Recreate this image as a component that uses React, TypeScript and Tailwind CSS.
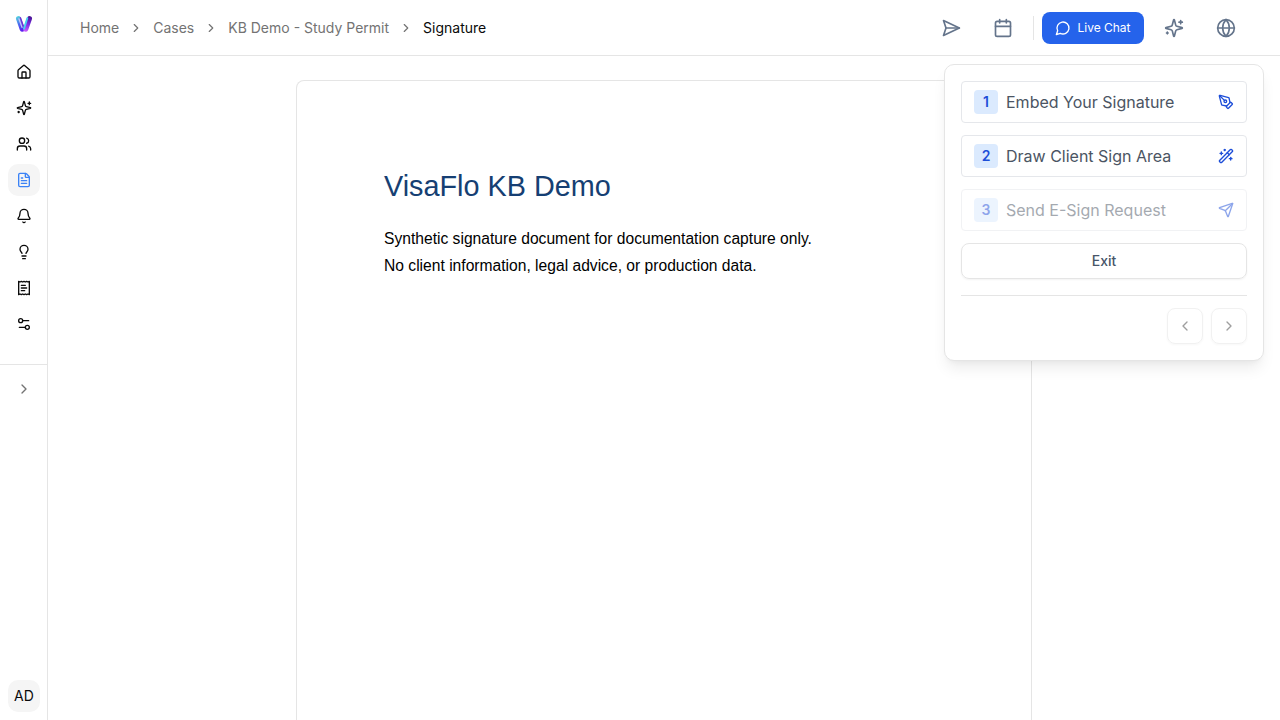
import React from "react";
import { House, Users, FileText, Bell, Lightbulb, Settings2, ChevronRight, ChevronLeft, Calendar, Globe, PenTool, WandSparkles, Send } from "lucide-react";

function Icon({ size, children }: { size: number; children: React.ReactNode }) {
  return (
    <svg width={size} height={size} viewBox="0 0 24 24" fill="none" stroke="currentColor" strokeWidth="2" strokeLinecap="round" strokeLinejoin="round">
      {children}
    </svg>
  );
}

function Sparkle({ size }: { size: number }) {
  return (
    <Icon size={size}>
      <path d="M9.937 15.5A2 2 0 0 0 8.5 14.063l-6.135-1.582a.5.5 0 0 1 0-.962L8.5 9.936A2 2 0 0 0 9.937 8.5l1.582-6.135a.5.5 0 0 1 .963 0L14.063 8.5A2 2 0 0 0 15.5 9.937l6.135 1.581a.5.5 0 0 1 0 .964L15.5 14.063a2 2 0 0 0-1.437 1.437l-1.582 6.135a.5.5 0 0 1-.963 0z" />
      <path d="M20 3v4M22 5h-4M4 17v2M5 18H3" />
    </Icon>
  );
}

function ReceiptIcon() {
  return (
    <Icon size={16}>
      <path d="M4 2v20l2-1 2 1 2-1 2 1 2-1 2 1 2-1 2 1V2l-2 1-2-1-2 1-2-1-2 1-2-1-2 1Z" />
      <path d="M14 8H8M16 12H8M13 16H8" />
    </Icon>
  );
}

function Logo() {
  return (
    <svg width="18" height="18" viewBox="0 0 18 18" fill="none" strokeLinecap="round">
      <defs>
        <linearGradient id="leftArm" gradientUnits="userSpaceOnUse" x1="2" y1="2" x2="7" y2="16">
          <stop offset="0" stopColor="#55cfe0" />
          <stop offset="0.5" stopColor="#4a6cf0" />
          <stop offset="1" stopColor="#5a1cf0" />
        </linearGradient>
        <linearGradient id="rightArm" gradientUnits="userSpaceOnUse" x1="15" y1="2" x2="10" y2="16">
          <stop offset="0" stopColor="#4b1496" />
          <stop offset="0.5" stopColor="#7a2ee6" />
          <stop offset="1" stopColor="#c85cfa" />
        </linearGradient>
      </defs>
      <path d="M3.5 3.6 7.2 14.2" stroke="url(#leftArm)" strokeWidth="5" />
      <path d="M14.5 3.6 10.8 14.2" stroke="url(#rightArm)" strokeWidth="5" />
      <path d="M5.4 2.8 9 13" stroke="#7430d2" strokeWidth="1.4" />
      <path d="M3.9 3.8 7 12.4" stroke="#c9c4f8" strokeWidth="1.3" />
      <path d="M12.3 3.2 9 13.6" stroke="#49d3ee" strokeWidth="1.9" />
    </svg>
  );
}

const nav = [
  <House size={16} />,
  <Sparkle size={16} />,
  <Users size={16} />,
  <FileText size={16} />,
  <Bell size={16} />,
  <Lightbulb size={16} />,
  <ReceiptIcon />,
  <Settings2 size={16} />,
];

const steps = [
  { label: "Embed Your Signature", icon: <PenTool size={16} />, disabled: false },
  { label: "Draw Client Sign Area", icon: <WandSparkles size={16} />, disabled: false },
  { label: "Send E-Sign Request", icon: <Send size={16} />, disabled: true },
];

const crumbs = ["Home", "Cases", "KB Demo - Study Permit"];

export default function App() {
  return (
    <div className="relative flex h-[720px] w-full overflow-hidden bg-white font-['Inter',sans-serif] text-neutral-950 antialiased">
      <aside className="flex w-12 shrink-0 flex-col border-r border-neutral-200">
        <div className="flex h-12 items-center justify-center"><Logo /></div>
        <nav className="flex flex-col gap-1 px-2 pt-2">
          {nav.map((icon, i) => (
            <div key={i} className={i === 3 ? "flex h-8 w-8 items-center justify-center rounded-[10px] bg-neutral-100 text-[#3b82f6]" : "flex h-8 w-8 items-center justify-center"}>{icon}</div>
          ))}
        </nav>
        <div className="mt-6 flex h-12 items-center justify-center border-t border-neutral-200 text-neutral-500"><ChevronRight size={16} /></div>
        <div className="mx-2 mt-auto mb-2 flex h-8 w-8 items-center justify-center rounded-[10px] bg-neutral-100 text-sm">AD</div>
      </aside>
      <div className="flex min-w-0 flex-1 flex-col">
        <header className="flex h-14 shrink-0 items-center justify-between border-b border-neutral-200 pr-9 pl-8">
          <div className="flex items-center gap-2.5 text-sm text-neutral-500">
            {crumbs.map((c) => (
              <React.Fragment key={c}>
                <span>{c}</span>
                <ChevronRight size={14} />
              </React.Fragment>
            ))}
            <span className="text-neutral-950">Signature</span>
          </div>
          <div className="flex items-center text-[#64748b]">
            <div className="flex w-9 justify-center">
              <Icon size={20}><path d="m3 3 3 9-3 9 19-9Z" /><path d="M6 12h16" /></Icon>
            </div>
            <div className="ml-4 flex w-9 justify-center"><Calendar size={20} /></div>
            <div className="mr-2 ml-3 h-6 w-px bg-neutral-200" />
            <div className="flex h-8 w-[102px] items-center justify-center gap-1.5 rounded-lg bg-[#2563eb] text-xs text-white">
              <Icon size={16}><path d="M7.9 20A9 9 0 1 0 4 16.1L2 22Z" /></Icon>
              Live Chat
            </div>
            <div className="ml-3 flex w-9 justify-center"><Sparkle size={20} /></div>
            <div className="ml-4 flex w-9 justify-center"><Globe size={20} /></div>
          </div>
        </header>
        <main className="flex flex-1 pt-6 pl-[248px]">
          <article className="w-[736px] rounded-t-lg border border-b-0 border-neutral-200 px-[87px] pt-[85px] font-['Liberation_Sans',sans-serif]">
            <h1 className="text-[28.8px] leading-10 text-[#163f73]">VisaFlo KB Demo</h1>
            <p className="mt-[19px] text-[15.63px] leading-[27px] text-black">Synthetic signature document for documentation capture only.<br />No client information, legal advice, or production data.</p>
          </article>
        </main>
      </div>
      <section className="absolute top-16 right-4 flex w-80 flex-col gap-3 rounded-[10px] border border-neutral-200 bg-white p-4 shadow-[0_10px_15px_-3px_rgba(0,0,0,0.08),0_4px_6px_-4px_rgba(0,0,0,0.06)]">
        {steps.map((s, i) => (
          <div key={s.label} className={s.disabled ? "flex h-[42px] items-center rounded border border-[#e5e7eb] px-3 opacity-50" : "flex h-[42px] items-center rounded border border-[#e5e7eb] px-3"}>
            <span className="flex h-6 w-6 items-center justify-center rounded bg-[#dbeafe] text-sm font-semibold text-[#1d4ed8]">{i + 1}</span>
            <span className="ml-2 flex-1 text-base text-[#4b5563]">{s.label}</span>
            <span className="text-[#1d4ed8]">{s.icon}</span>
          </div>
        ))}
        <div className="flex h-9 items-center justify-center rounded-lg border border-neutral-200 text-sm font-medium text-[#475569] shadow-xs">Exit</div>
        <div className="mt-1 flex justify-end gap-2 border-t border-neutral-200 pt-3">
          <div className="flex h-9 w-9 items-center justify-center rounded-lg border border-neutral-200 text-neutral-700 opacity-50 shadow-xs"><ChevronLeft size={16} /></div>
          <div className="flex h-9 w-9 items-center justify-center rounded-lg border border-neutral-200 text-neutral-700 opacity-50 shadow-xs"><ChevronRight size={16} /></div>
        </div>
      </section>
    </div>
  );
}
